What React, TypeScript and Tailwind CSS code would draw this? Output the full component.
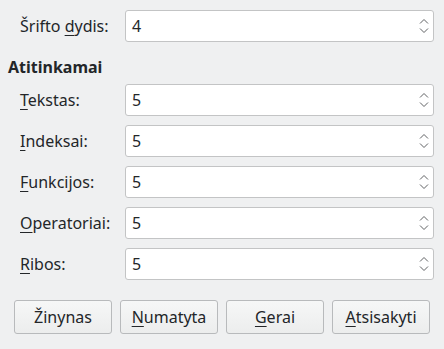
import React from 'react';

const font = {fontFamily: '"Noto Sans", "Open Sans", sans-serif'};

function Mn(props: { children: React.ReactNode }) {
    return <span className="underline underline-offset-[3px] decoration-1">{props.children}</span>;
}

function Chevrons() {
    return (
        <svg width="10" height="16" viewBox="0 0 10 16" className="text-[#606264]">
            <path d="M1 5.5 L5 1.5 L9 5.5" fill="none" stroke="currentColor" strokeWidth="1"/>
            <path d="M1 10.5 L5 14.5 L9 10.5" fill="none" stroke="currentColor" strokeWidth="1"/>
        </svg>
    );
}

function SpinRow(props: { label: React.ReactNode, value: string }) {
    return (
        <div className="flex items-center">
            <div className="w-[125px] pl-[20px] text-[16px] text-[#232629]">{props.label}</div>
            <div className="w-[309px] h-8 bg-white border border-[#c3c4c5] rounded-[3px] flex items-center justify-between pl-[6px] pr-[4px]">
                <span className="text-[16px] text-[#232629]">{props.value}</span>
                <Chevrons/>
            </div>
        </div>
    );
}

function Btn(props: { children: React.ReactNode }) {
    return (
        <button className="w-[98px] h-[34px] rounded-[3px] border border-[#b8babc] bg-gradient-to-b from-[#f6f7f7] to-[#eceded] text-[16px] text-[#232629] flex items-center justify-center">
            {props.children}
        </button>
    );
}

export default function App() {
    return (
        <div className="w-[444px] h-[349px] bg-[#eff0f1] pt-[10px]" style={font}>
            <SpinRow label={<>Šrifto <Mn>d</Mn>ydis:</>} value="4"/>
            <div className="pl-[8px] mt-[15px] mb-[7px] leading-5 text-[16px] font-bold text-[#232629]">Atitinkamai</div>
            <div className="flex flex-col gap-[9px]">
                <SpinRow label={<><Mn>T</Mn>ekstas:</>} value="5"/>
                <SpinRow label={<><Mn>I</Mn>ndeksai:</>} value="5"/>
                <SpinRow label={<><Mn>F</Mn>unkcijos:</>} value="5"/>
                <SpinRow label={<><Mn>O</Mn>peratoriai:</>} value="5"/>
                <SpinRow label={<><Mn>R</Mn>ibos:</>} value="5"/>
            </div>
            <div className="flex gap-[8px] pl-[14px] mt-[20px]">
                <Btn>Žinynas</Btn>
                <Btn><Mn>N</Mn>umatyta</Btn>
                <Btn><Mn>G</Mn>erai</Btn>
                <Btn><Mn>A</Mn>tsisakyti</Btn>
            </div>
        </div>
    );
}
